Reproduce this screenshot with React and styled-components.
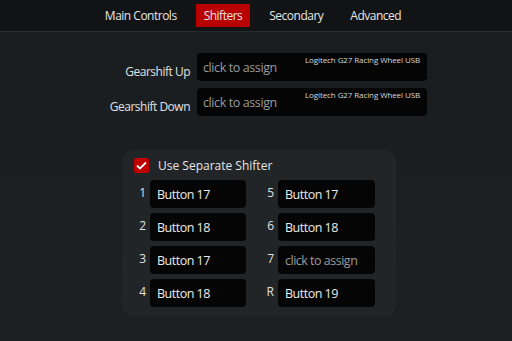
import styled, { createGlobalStyle } from "styled-components";

const Global = createGlobalStyle`
body {
  margin: 0;
  background: #1b1e20;
  font-family: 'Open Sans', 'Noto Sans', sans-serif;
}
`

const tabs = ["Main Controls", "Shifters", "Secondary", "Advanced"]

const slots = [
  ["1", "Button 17"], ["5", "Button 17"],
  ["2", "Button 18"], ["6", "Button 18"],
  ["3", "Button 17"], ["7", null],
  ["4", "Button 18"], ["R", "Button 19"],
]

export default function App() {
  return (
    <Page>
      <Global />
      <TabBar>
        {tabs.map(t => (
          <Tab key={t} $active={t === "Shifters"}>{t}</Tab>
        ))}
      </TabBar>

      <Form>
        <Label>Gearshift Up</Label>
        <AssignBox>
          <Device>Logitech G27 Racing Wheel USB</Device>
          <Placeholder>click to assign</Placeholder>
        </AssignBox>
        <Label>Gearshift Down</Label>
        <AssignBox>
          <Device>Logitech G27 Racing Wheel USB</Device>
          <Placeholder>click to assign</Placeholder>
        </AssignBox>
      </Form>

      <Panel>
        <CheckRow>
          <Check>
            <svg width="11" height="9" viewBox="0 0 11 9">
              <path d="M1 4.5 L4 7.5 L10 1.5" fill="none" stroke="#fff" strokeWidth="1.8" />
            </svg>
          </Check>
          Use Separate Shifter
        </CheckRow>
        <Grid>
          {slots.map(([n, v]) => (
            <Slot key={n}>
              <Gear>{n}</Gear>
              <ButtonBox $empty={!v}>{v || "click to assign"}</ButtonBox>
            </Slot>
          ))}
        </Grid>
      </Panel>
    </Page>
  )
}

const Page = styled.div`
width: 512px;
height: 341px;
background: linear-gradient(#1a1d1f, #1d2022);
overflow: hidden;
`
const TabBar = styled.div`
height: 31px;
background: #111314;
border-bottom: 1px solid #2a2d2f;
display: flex;
justify-content: center;
align-items: center;
gap: 11px;
padding-right: 6px;
`
const Tab = styled.div`
height: 23px;
padding: 0 8px;
display: flex;
align-items: center;
font-size: 12px;
letter-spacing: -0.5px;
color: #e6e6e6;
background: ${p => p.$active ? "#b80000" : "transparent"};
`
const Form = styled.div`
display: grid;
grid-template-columns: 190px 230px;
column-gap: 7px;
row-gap: 7px;
margin-top: 21px;
`
const Label = styled.div`
text-align: right;
align-self: center;
font-size: 12px;
letter-spacing: -0.5px;
color: #e0e0e0;
padding-top: 8px;
`
const AssignBox = styled.div`
height: 28px;
background: #050505;
border-radius: 4px;
position: relative;
display: flex;
align-items: center;
padding-left: 6px;
`
const Device = styled.div`
position: absolute;
top: 1px;
right: 7px;
font-size: 8px;
letter-spacing: -0.1px;
color: #d8d8d8;
`
const Placeholder = styled.span`
font-size: 12.5px;
letter-spacing: -0.4px;
color: #9c9c9c;
`
const Panel = styled.div`
width: 253px;
margin: 34px 0 0 122px;
padding: 7px 9px 9px 12px;
background: #222527;
border-radius: 12px;
`
const CheckRow = styled.div`
display: flex;
align-items: center;
gap: 9px;
font-size: 12px;
color: #e6e6e6;
height: 16px;
`
const Check = styled.div`
width: 15px;
height: 15px;
border-radius: 2px;
background: #c00000;
display: flex;
align-items: center;
justify-content: center;
`
const Grid = styled.div`
display: grid;
grid-template-columns: 112px 113px;
column-gap: 16px;
row-gap: 5px;
margin-top: 7px;
`
const Slot = styled.div`
display: flex;
align-items: center;
`
const Gear = styled.div`
width: 12px;
padding-right: 4px;
text-align: right;
font-size: 12px;
color: #e0e0e0;
margin-top: -4px;
`
const ButtonBox = styled.div`
flex: 1;
height: 28px;
background: #050505;
border-radius: 4px;
display: flex;
align-items: center;
padding-left: 7px;
font-size: 12.5px;
letter-spacing: -0.5px;
color: ${p => p.$empty ? "#9c9c9c" : "#ececec"};
`
